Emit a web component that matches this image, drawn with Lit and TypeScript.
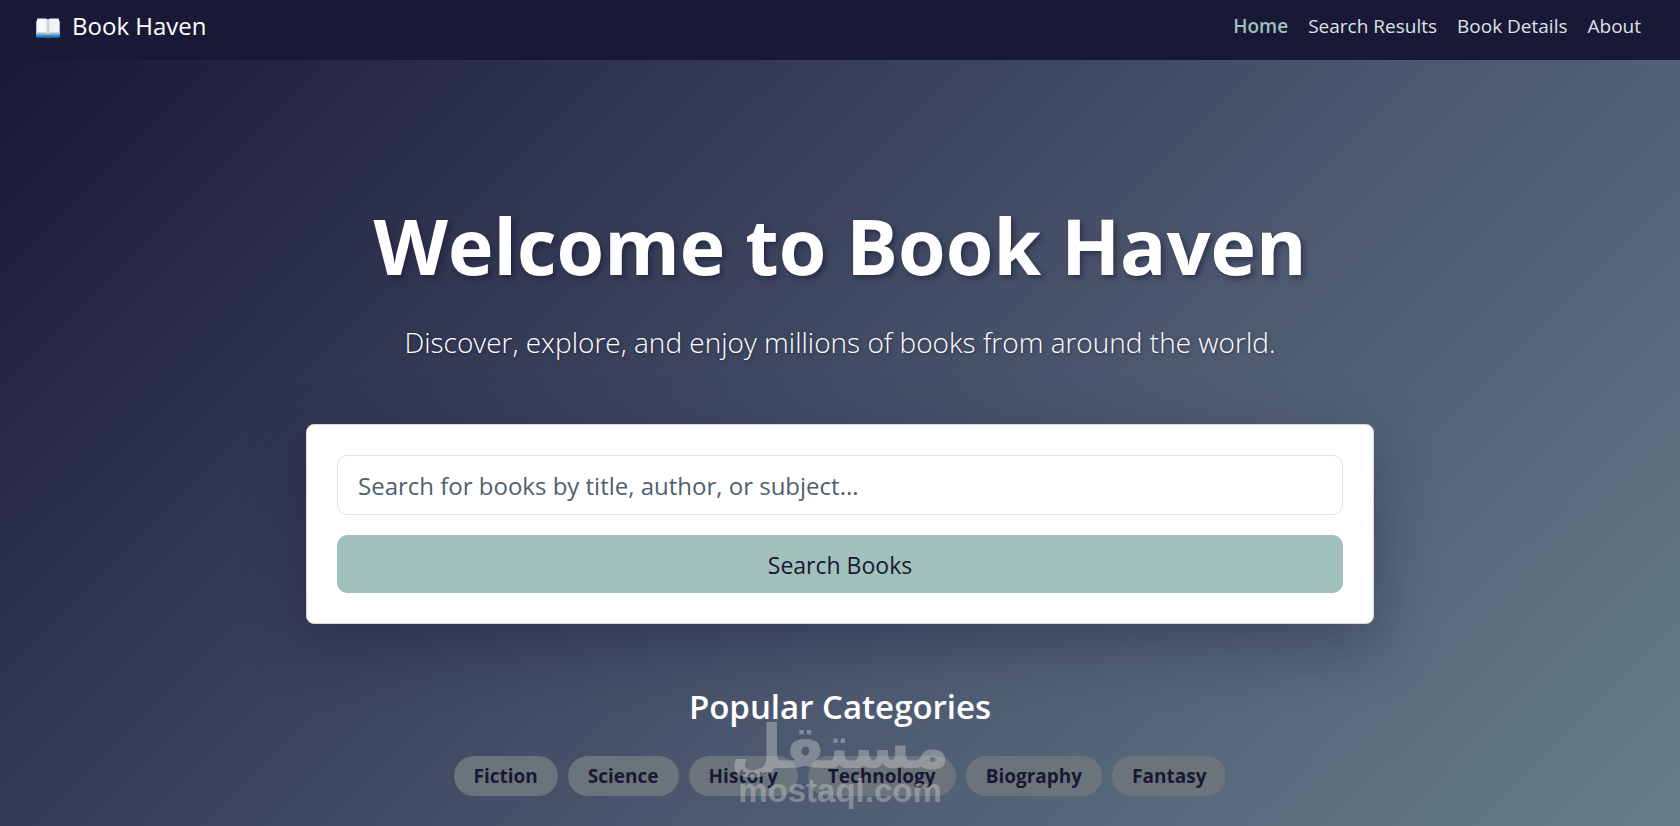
import { LitElement, html, css } from "lit";
import { customElement, property, state } from "lit/decorators.js";
import { classMap } from "lit/directives/class-map.js";

@customElement("site-header")
class SiteHeader extends LitElement {
  @property() active = "Home";

  static styles = css`
    :host {
      display: block;
      background: #1a1837;
    }
    .bar {
      display: flex;
      flex-wrap: wrap;
      align-items: center;
      justify-content: space-between;
      padding: 8px 39px 16px 35px;
      line-height: 36px;
    }
    .brand {
      display: flex;
      align-items: center;
      gap: 11px;
      color: #fff;
      font-size: 24px;
      text-decoration: none;
    }
    .book {
      width: 26px;
      height: 22px;
      margin-top: 4px;
    }
    .links {
      display: flex;
      flex-wrap: wrap;
      gap: 20px;
      margin: 0;
      padding: 0;
      list-style: none;
      font-size: 19px;
    }
    .link {
      color: #dee2e6;
      text-decoration: none;
    }
    .active {
      color: #a0c0ba;
      font-weight: 600;
    }
  `;

  render() {
    const links = ["Home", "Search Results", "Book Details", "About"];
    return html`
      <nav class="bar" aria-label="Main">
        <a class="brand" href="#home">
          <svg class="book" viewBox="0 0 26 22" aria-hidden="true">
            <path d="M1 16h24v3.500q0 1-1 1H14.500L13 21.500 11.500 20.500H2q-1 0-1-1z" fill="#2f86d6" />
            <path d="M1 4h24v13.500H14L13 18.500 12 17.500H1z" fill="#8fc3e6" />
            <path d="M2 15h22v2.500H14L13 18.500 12 17.500H2z" fill="#9cbfb8" />
            <path d="M2 2.500Q2 1.500 3 1.500H10.500Q13 1.500 13 3.500V17Q13 15.500 10.500 15.500H2z" fill="#f7f8f9" />
            <path d="M24 2.500Q24 1.500 23 1.500H15.500Q13 1.500 13 3.500V17Q13 15.500 15.500 15.500H24z" fill="#f1f3f5" />
            <path d="M11.500 1.800Q13 2.200 13 3.500 13 2.200 14.500 1.800V15.700Q13 16.200 13 17 13 16.200 11.500 15.700z" fill="#ccd5df" />
            <path d="M12 19h2v1.500L13 21.500 12 20.500z" fill="#1758a6" />
          </svg>
          <span>Book Haven</span>
        </a>
        <ul class="links">
          ${links.map(
            (l) => html`<li>
              <a class=${classMap({ link: true, active: l === this.active })} href="#${l.toLowerCase().replace(" ", "-")}">${l}</a>
            </li>`
          )}
        </ul>
      </nav>
    `;
  }
}

@customElement("search-card")
class SearchCard extends LitElement {
  @state() private query = "";

  static styles = css`
    :host {
      display: block;
      padding: 30px;
      background: #fff;
      border: 1px solid #d9d5d2;
      border-radius: 8px;
      box-shadow: 0 20px 60px rgba(26, 24, 55, 0.4);
    }
    .form {
      display: grid;
      gap: 20px;
    }
    .field,
    .submit {
      box-sizing: border-box;
      width: 100%;
      border-radius: 10px;
      font-family: inherit;
      line-height: 38px;
    }
    .field {
      padding: 11px 20px 9px;
      border: 1px solid #dee2e6;
      color: #1a1837;
      font-size: 24px;
      outline-color: #a0c0ba;
    }
    .field::placeholder {
      color: #4f606e;
      opacity: 1;
    }
    .submit {
      padding: 11px 20px 9px;
      border: 0;
      background: #a2c1bb;
      color: #1a1837;
      font-size: 23px;
      cursor: pointer;
    }
  `;

  render() {
    return html`
      <form class="form" @submit=${(e: Event) => e.preventDefault()}>
        <input
          class="field"
          type="text"
          aria-label="Search for books"
          placeholder="Search for books by title, author, or subject..."
          .value=${this.query}
          @input=${(e: Event) => (this.query = (e.target as HTMLInputElement).value)}
        />
        <button class="submit" type="submit">Search Books</button>
      </form>
    `;
  }
}

@customElement("app-root")
class AppRoot extends LitElement {
  static styles = css`
    :host {
      position: relative;
      display: flex;
      flex-direction: column;
      min-height: 100vh;
      overflow: hidden;
      font-family: "Open Sans", "Noto Sans", sans-serif;
    }
    .hero {
      flex: 1;
      padding: 138px 15px 30px;
      background: linear-gradient(135deg, #1a1837 0%, #4a566d 57%, #667d89 100%);
      color: #fff;
      text-align: center;
    }
    .column {
      max-width: 1068px;
      margin: 0 auto;
    }
    .title {
      margin: 0 0 26px;
      font-size: 77px;
      line-height: 96px;
      font-weight: 700;
      text-shadow: 3px 3px 5px rgba(26, 24, 55, 0.5);
    }
    .lead {
      margin: 0 0 60px;
      font-size: 28px;
      line-height: 44px;
      font-weight: 300;
      text-shadow: 1px 1px 3px rgba(26, 24, 55, 0.5);
    }
    .subtitle {
      margin: 61px 0 27px;
      font-size: 33px;
      line-height: 44px;
      font-weight: 600;
    }
    .tags {
      display: flex;
      flex-wrap: wrap;
      justify-content: center;
      gap: 10px;
      margin: 0;
      padding: 0;
      list-style: none;
    }
    .tag {
      display: block;
      padding: 1px 20px 0;
      border-radius: 20px;
      background: #6b747a;
      color: #1a1837;
      font-size: 19px;
      line-height: 39px;
      font-weight: 700;
      text-decoration: none;
    }
    .mark {
      position: absolute;
      left: 50%;
      bottom: 12px;
      width: 240px;
      height: 120px;
      transform: translateX(-50%);
      fill: #d0d0d0;
      opacity: 0.4;
      pointer-events: none;
    }
    .mark-arabic {
      font: 700 60px "DejaVu Sans", sans-serif;
    }
    .mark-latin {
      font: 700 33px "Liberation Sans", sans-serif;
    }
  `;

  render() {
    const tags = ["Fiction", "Science", "History", "Technology", "Biography", "Fantasy"];
    return html`
      <site-header></site-header>
      <main class="hero">
        <div class="column">
          <h1 class="title">Welcome to Book Haven</h1>
          <p class="lead">Discover, explore, and enjoy millions of books from around the world.</p>
          <search-card></search-card>
          <h2 class="subtitle">Popular Categories</h2>
          <ul class="tags">
            ${tags.map((t) => html`<li><a class="tag" href="#${t.toLowerCase()}">${t}</a></li>`)}
          </ul>
        </div>
      </main>
      <svg class="mark" viewBox="0 0 240 120" aria-hidden="true">
        <text class="mark-arabic" x="120" y="74" text-anchor="middle">مستقل</text>
        <text class="mark-latin" x="120" y="108" text-anchor="middle">mostaql.com</text>
      </svg>
    `;
  }
}
